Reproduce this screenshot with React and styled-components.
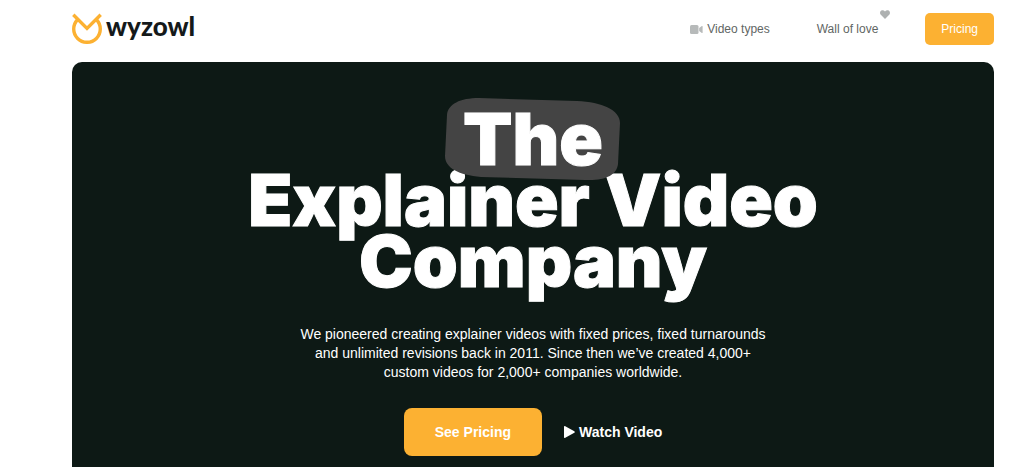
import styled, { createGlobalStyle } from "styled-components"

const GlobalStyle = createGlobalStyle`
  * {
    box-sizing: border-box;
  }
  body {
    margin: 0;
    background-color: #fff;
    font-family: "Liberation Sans", Arial, sans-serif;
  }
`
const Page = styled.div`
  display: flex;
  flex-direction: column;
  min-height: 100vh;
  padding: 0 30px 0 72px;
`
const Header = styled.header`
  display: flex;
  align-items: flex-start;
  justify-content: space-between;
  height: 62px;
  padding-top: 13px;
`
const Logo = styled.a`
  display: flex;
  align-items: flex-start;
  gap: 4px;
  color: #14191a;
  text-decoration: none;
`
const LogoText = styled.span`
  font-family: Lato, sans-serif;
  font-size: 26px;
  font-weight: 900;
  line-height: 26px;
`
const Nav = styled.nav`
  display: flex;
  align-items: center;
  gap: 47px;
`
const NavLink = styled.a`
  position: relative;
  display: flex;
  align-items: center;
  gap: 4px;
  color: #5f6664;
  font-size: 12px;
  line-height: 16px;
  text-decoration: none;
`
const HeartBadge = styled.svg`
  position: absolute;
  top: -11px;
  right: -12px;
`
const PricingButton = styled.button`
  height: 32px;
  padding: 0 16px;
  border: 0;
  border-radius: 5px;
  background-color: #fcb132;
  color: #fff;
  font-family: inherit;
  font-size: 12px;
  cursor: pointer;
`
const Hero = styled.main`
  flex: 1;
  display: flex;
  flex-direction: column;
  align-items: center;
  padding: 46px 24px 10px;
  border-radius: 10px 10px 0 0;
  background-color: #0d1915;
  color: #fff;
  text-align: center;
`
const Title = styled.h1`
  max-width: 640px;
  margin: 0;
  font-family: Inter, sans-serif;
  font-size: 72px;
  font-weight: 900;
  line-height: 61px;
  -webkit-text-stroke: 1px #fff;
`
const Highlight = styled.span`
  position: relative;
  display: inline-block;
  isolation: isolate;
`
const Blob = styled.svg`
  position: absolute;
  z-index: -1;
  top: -10px;
  left: -18px;
`
const Intro = styled.p`
  max-width: 480px;
  margin: 34px 0 26px;
  font-size: 14px;
  line-height: 19px;
`
const Actions = styled.div`
  display: flex;
  align-items: center;
  gap: 22px;
`
const ActionButton = styled.button`
  display: flex;
  align-items: center;
  gap: 4px;
  height: 48px;
  padding: ${({ $primary }) => ($primary ? "0 31px" : "0")};
  border: 0;
  border-radius: 8px;
  background-color: ${({ $primary }) => ($primary ? "#fcb132" : "transparent")};
  color: #fff;
  font-family: inherit;
  font-size: 14px;
  font-weight: 700;
  cursor: pointer;
`

const OwlMark = () => (
  <svg width="30" height="31" viewBox="0 0 30 31" fill="none" stroke="#fcb132" strokeWidth="3.4">
    <path d="M1.3 1.7 L15 15.4 L28.7 1.7" />
    <path d="M5.5 6.7 A13.3 13.3 0 1 0 24.5 6.7" />
  </svg>
)

const CameraIcon = () => (
  <svg width="13" height="9" viewBox="0 0 13 9" fill="#b7baba">
    <rect width="8.5" height="9" rx="1.5" />
    <path d="M9.2 3 L11.8 1.1 Q12.6 .8 12.6 1.6 V7.4 Q12.6 8.2 11.8 7.9 L9.2 6 Z" />
  </svg>
)

const Heart = () => (
  <HeartBadge width="10" height="9" viewBox="0 0 10 9" fill="#aeb1b1">
    <path d="M5 9 L.8 4.8 C-.4 3.5 -.1 1.4 1.3 .6 C2.6 -.2 4 .2 5 1.4 C6 .2 7.4 -.2 8.7 .6 C10.1 1.4 10.4 3.5 9.2 4.8 Z" />
  </HeartBadge>
)

const PlayIcon = () => (
  <svg width="11" height="12" viewBox="0 0 11 12" fill="#fff">
    <path d="M0 1 Q0 -.4 1.3 .3 L10.3 5.2 Q11.3 6 10.3 6.8 L1.3 11.7 Q0 12.4 0 11 Z" />
  </svg>
)

const App = () => {
  return (
    <>
      <GlobalStyle />
      <Page>
        <Header>
          <Logo href="#">
            <OwlMark />
            <LogoText>wyzowl</LogoText>
          </Logo>
          <Nav>
            <NavLink href="#video-types">
              <CameraIcon />
              Video types
            </NavLink>
            <NavLink href="#wall-of-love">
              Wall of love
              <Heart />
            </NavLink>
            <PricingButton type="button">Pricing</PricingButton>
          </Nav>
        </Header>
        <Hero>
          <Title>
            <Highlight>
              <Blob width="175" height="83" viewBox="0 0 175 83" fill="#444">
                <path d="M2 17 C3 6 15 0 34 0 L132 3 C157 4 175 12 175 25 L173 66 C172 77 160 83 140 82 L36 79 C14 77 0 70 0 58 Z" />
              </Blob>
              The
            </Highlight>
            <br />
            Explainer Video Company
          </Title>
          <Intro>
            We pioneered creating explainer videos with fixed prices, fixed turnarounds and unlimited
            revisions back in 2011. Since then we’ve created 4,000+ custom videos for 2,000+ companies
            worldwide.
          </Intro>
          <Actions>
            <ActionButton type="button" $primary>
              See Pricing
            </ActionButton>
            <ActionButton type="button">
              <PlayIcon />
              Watch Video
            </ActionButton>
          </Actions>
        </Hero>
      </Page>
    </>
  )
}

export default App
